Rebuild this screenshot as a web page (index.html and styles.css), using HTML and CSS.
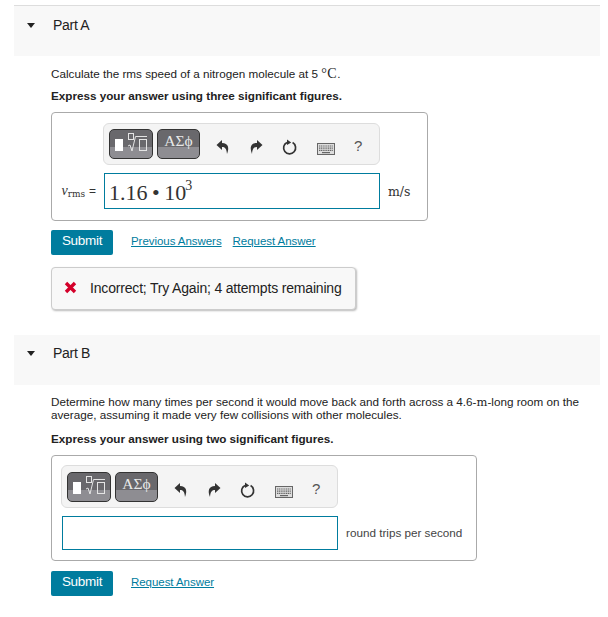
FILE: index.html
```html
<!DOCTYPE html>
<html lang="en">
<head>
  <meta charset="UTF-8" />
  <title>Part A and Part B</title>
  <link rel="stylesheet" href="styles.css">
</head>
<body>
  <svg class="defs" width="0" height="0">
    <symbol id="undo" viewBox="0 0 14 16"><path d="M6 1 L0.5 6 L6 11 V8 C9 8 10.5 9.5 11 15 C13.5 9 12.5 4 6 4 Z" fill="#333"/></symbol>
    <symbol id="redo" viewBox="0 0 14 16"><path d="M8 1 L13.5 6 L8 11 V8 C5 8 3.5 9.5 3 15 C0.5 9 1.5 4 8 4 Z" fill="#333"/></symbol>
    <symbol id="reset" viewBox="0 0 16 16"><path d="M10.6 3.6 A6 6 0 1 1 5 3.4" fill="none" stroke="#333" stroke-width="1.7"/><path d="M5 0.4 L9.2 3.4 L5 6 Z" fill="#333"/></symbol>
    <symbol id="keys" viewBox="0 0 18 12"><rect x="0.5" y="0.5" width="17" height="11" fill="#ddd" stroke="#666"/><path d="M2 3h14M2 5.2h14M2 7.4h14" stroke="#666" stroke-width="1.2" stroke-dasharray="1.2 .6"/><path d="M5 9.6h8" stroke="#666" stroke-width="1.2"/></symbol>
    <symbol id="templates" viewBox="0 0 42 28"><rect x="5" y="9" width="8" height="12" fill="#fff"/><path d="M18 16 L20 15 L22 21 L25.500 6.500 H37" fill="none" stroke="#e4e4e4" stroke-width="1"/><rect x="18.500" y="3.500" width="5" height="6" fill="none" stroke="#e4e4e4"/><rect x="29.500" y="9.500" width="7" height="11" fill="none" stroke="#e4e4e4"/></symbol>
  </svg>

  <section class="part part-a">
    <div class="part-head"><span class="arrow"></span><span>Part A</span></div>
    <div class="part-body">
      <p class="question">Calculate the rms speed of a nitrogen molecule at 5 <span class="math">°C</span>.</p>
      <p class="hint">Express your answer using three significant figures.</p>
      <div class="answer answer-a">
        <div class="toolbar">
          <button class="tool-btn tool-tpl"><svg width="42" height="28"><use href="#templates"/></svg></button>
          <button class="tool-btn tool-sym">ΑΣϕ</button>
          <div class="tools">
            <svg class="ico" width="14" height="16"><use href="#undo"/></svg>
            <svg class="ico" width="14" height="16"><use href="#redo"/></svg>
            <svg class="ico" width="16" height="16"><use href="#reset"/></svg>
            <svg class="ico ico-keys" width="18" height="12"><use href="#keys"/></svg>
            <span class="help">?</span>
          </div>
        </div>
        <div class="entry">
          <span class="var"><i>v</i><sub>rms</sub> <span class="eq">=</span></span>
          <div class="field">1.16 • 10<sup>3</sup></div>
          <span class="unit">m/s</span>
        </div>
      </div>
      <div class="actions">
        <button class="submit">Submit</button>
        <a href="#">Previous Answers</a>
        <a href="#">Request Answer</a>
      </div>
      <div class="feedback"><svg width="13" height="13" viewBox="0 0 13 13"><path d="M2 2 L11 11 M11 2 L2 11" stroke="#d4002a" stroke-width="3.400"/></svg><span>Incorrect; Try Again; 4 attempts remaining</span></div>
    </div>
  </section>

  <section class="part part-b">
    <div class="part-head"><span class="arrow"></span><span>Part B</span></div>
    <div class="part-body">
      <p class="question">Determine how many times per second it would move back and forth across a 4.6-<span class="unit-inline">m</span>-long room on the average, assuming it made very few collisions with other molecules.</p>
      <p class="hint">Express your answer using two significant figures.</p>
      <div class="answer answer-b">
        <div class="toolbar">
          <button class="tool-btn tool-tpl"><svg width="42" height="28"><use href="#templates"/></svg></button>
          <button class="tool-btn tool-sym">ΑΣϕ</button>
          <div class="tools">
            <svg class="ico" width="14" height="16"><use href="#undo"/></svg>
            <svg class="ico" width="14" height="16"><use href="#redo"/></svg>
            <svg class="ico" width="16" height="16"><use href="#reset"/></svg>
            <svg class="ico ico-keys" width="18" height="12"><use href="#keys"/></svg>
            <span class="help">?</span>
          </div>
        </div>
        <div class="entry">
          <div class="field"></div>
          <span class="unit-text">round trips per second</span>
        </div>
      </div>
      <div class="actions">
        <button class="submit">Submit</button>
        <a href="#">Request Answer</a>
      </div>
    </div>
  </section>
</body>
</html>
```

FILE: styles.css
```css
* {
  box-sizing: border-box;
}

body {
  margin: 0;
  padding: 5px 8px 0 14px;
  font-family: "Liberation Sans", Arial, sans-serif;
  font-size: 11.7px;
  color: #222;
  background: #fff;
}

.defs {
  position: absolute;
}

.part-head {
  height: 50px;
  background: #f8f8f8;
  display: flex;
  align-items: flex-start;
  gap: 18px;
  padding: 10px 0 0 13px;
  font-size: 14px;
  line-height: 16px;
  letter-spacing: -0.3px;
}

.part-a .part-head {
  border-top: 1px solid #ddd;
  height: 51px;
  padding-top: 11px;
}

.arrow {
  width: 0;
  height: 0;
  margin-top: 6px;
  border-left: 4.500px solid transparent;
  border-right: 4.500px solid transparent;
  border-top: 5px solid #222;
}

.part-body {
  padding-left: 37px;
}

.question {
  margin: 0;
  line-height: 13px;
}

.part-a .question {
  padding-top: 11px;
}

.part-b .question {
  padding-top: 10px;
}

.math {
  font-family: "Liberation Serif", serif;
  font-size: 14px;
  letter-spacing: 0.5px;
}

.unit-inline {
  font-family: "DejaVu Serif", serif;
  font-size: 11.5px;
  line-height: 0;
}

.hint {
  margin: 9px 0 0;
  font-weight: bold;
  line-height: 14px;
}

.part-b .hint {
  margin-top: 11px;
}

.answer {
  margin-top: 9px;
  border: 1px solid #aaa;
  border-radius: 4px;
}

.answer-a {
  width: 377px;
  height: 109px;
  padding: 10px 0 0 51px;
}

.answer-b {
  width: 426px;
  height: 106px;
  padding: 9px 0 0 9px;
}

.toolbar {
  width: 277px;
  height: 42px;
  display: flex;
  align-items: center;
  gap: 4px;
  padding: 0 0 0 5px;
  background: #f4f4f4;
  border: 1px solid #ddd;
  border-radius: 6px;
}

.answer-b .toolbar {
  height: 43px;
}

.tool-btn {
  height: 30px;
  padding: 0;
  border: 1px solid #333;
  border-radius: 5px;
  background: linear-gradient(#69686c 0 62%, #8e8d92 62%);
  color: #e8e8e8;
  font-family: "Liberation Serif", serif;
  font-size: 15.500px;
  line-height: 1;
  display: flex;
  justify-content: center;
  align-items: flex-start;
}

.tool-tpl {
  width: 44px;
}

.tool-sym {
  width: 43px;
  padding-top: 3px;
}

.tools {
  display: flex;
  align-items: center;
  margin: 6px 0 0 12px;
  gap: 19px;
}

.ico-keys {
  margin-top: 4px;
}

.help {
  margin-top: -3px;
  font-size: 15px;
  color: #555;
}

.entry {
  display: flex;
  align-items: center;
  margin-top: 8px;
}

.answer-a .entry {
  margin-left: -51px;
}

.answer-b .entry {
  margin-left: 1px;
}

.var {
  width: 52px;
  padding-right: 8px;
  text-align: right;
  font-family: "DejaVu Serif", serif;
  font-size: 12px;
  color: #333;
  white-space: nowrap;
}

.var i {
  font-family: "Liberation Serif", serif;
  font-size: 14px;
}

.var sub {
  font-size: 9px;
  vertical-align: -2px;
  line-height: 0;
}

.eq {
  font-family: "Liberation Sans", sans-serif;
  font-size: 12px;
}

.field {
  border: 1px solid #007c9e;
  font-family: "Liberation Serif", serif;
  font-size: 22px;
  word-spacing: -1px;
  color: #333;
  padding-left: 4px;
  background: #fff;
}

.answer-a .field {
  width: 276px;
  height: 36px;
  line-height: 37px;
}

.answer-b .field {
  width: 276px;
  height: 34px;
}

.field sup {
  font-size: 14px;
  line-height: 0;
  vertical-align: 10px;
  margin-left: -1px;
}

.unit {
  margin-left: 8px;
  font-family: "DejaVu Serif", serif;
  font-size: 12.5px;
  color: #333;
}

.unit-text {
  margin-left: 8px;
  padding-bottom: 2px;
  color: #444;
}

.actions {
  display: flex;
  align-items: center;
  gap: 11px;
  margin-top: 9px;
}

.answer-b + .actions {
  margin-top: 10px;
}

.submit {
  width: 62px;
  height: 25px;
  margin-right: 7px;
  padding: 0 0 4px;
  border: 0;
  border-radius: 2px;
  background: #007c9e;
  color: #fff;
  font: 13.500px "Liberation Sans", Arial, sans-serif;
  letter-spacing: -0.3px;
}

.actions a {
  margin-bottom: 3px;
  color: #007c9e;
  font-size: 11.500px;
  letter-spacing: -0.05px;
}

.feedback {
  display: flex;
  align-items: center;
  gap: 13px;
  width: 305px;
  height: 43px;
  margin-top: 12px;
  padding: 0 0 2px 12px;
  background: #f8f8f8;
  border: 1px solid #ccc;
  border-radius: 4px;
  box-shadow: 1px 1px 2px #bbb;
  font-size: 14px;
  letter-spacing: -0.18px;
}

.part-b {
  margin-top: 25px;
}
```
